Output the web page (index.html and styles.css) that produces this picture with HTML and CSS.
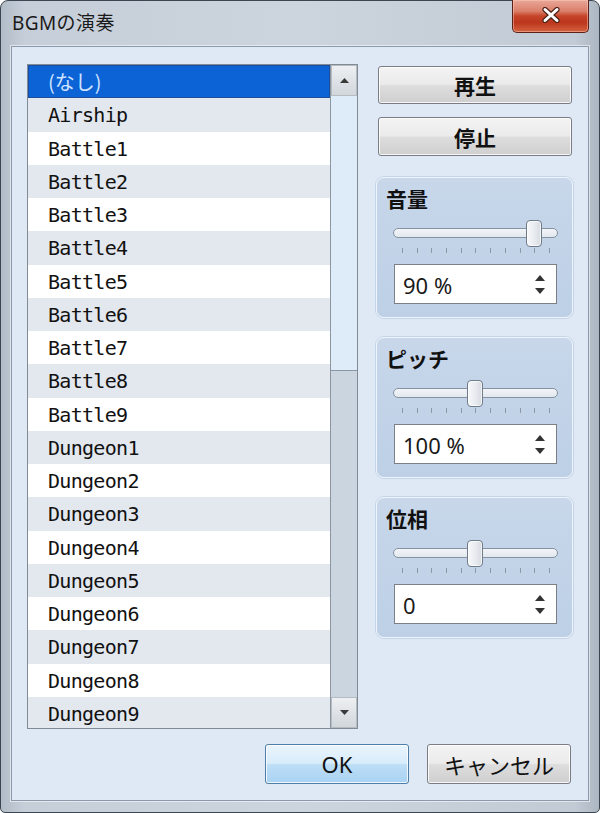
FILE: index.html
```html
<!DOCTYPE html>
<html lang="ja">
<head>
<meta charset="utf-8">
<title>BGMの演奏</title>
<link rel="stylesheet" href="styles.css">
</head>
<body>
<div class="window">
  <div class="titlebar">
    <span class="title">BGMの演奏</span>
    <div class="close">
      <svg width="20" height="16" viewBox="0 0 20 16">
        <path d="M4 2.5 L16 13.5 M16 2.5 L4 13.5" stroke="#4a2018" stroke-width="5.2" stroke-linecap="round"/>
        <path d="M4 2.5 L16 13.5 M16 2.5 L4 13.5" stroke="#ffffff" stroke-width="3" stroke-linecap="round"/>
      </svg>
    </div>
  </div>
  <div class="client">
    <div class="main">
      <div class="listbox">
        <div class="rows">
          <div class="row sel">(なし)</div>
          <div class="row alt">Airship</div>
          <div class="row">Battle1</div>
          <div class="row alt">Battle2</div>
          <div class="row">Battle3</div>
          <div class="row alt">Battle4</div>
          <div class="row">Battle5</div>
          <div class="row alt">Battle6</div>
          <div class="row">Battle7</div>
          <div class="row alt">Battle8</div>
          <div class="row">Battle9</div>
          <div class="row alt">Dungeon1</div>
          <div class="row">Dungeon2</div>
          <div class="row alt">Dungeon3</div>
          <div class="row">Dungeon4</div>
          <div class="row alt">Dungeon5</div>
          <div class="row">Dungeon6</div>
          <div class="row alt">Dungeon7</div>
          <div class="row">Dungeon8</div>
          <div class="row alt">Dungeon9</div>
        </div>
        <div class="scrollbar">
          <div class="sb-btn"><svg width="9" height="5" viewBox="0 0 9 5"><path d="M0 5 L4.5 0 L9 5 Z" fill="#3a3a3a"/></svg></div>
          <div class="sb-thumb"></div>
          <div class="sb-track"></div>
          <div class="sb-btn"><svg width="9" height="5" viewBox="0 0 9 5"><path d="M0 0 L9 0 L4.5 5 Z" fill="#3a3a3a"/></svg></div>
        </div>
      </div>
      <div class="side">
        <div class="btn btn-play">再生</div>
        <div class="btn btn-stop">停止</div>

        <div class="group">
          <div class="group-label">音量</div>
          <div class="slider">
            <div class="track"></div>
            <div class="thumb" style="left: 133px"></div>
          </div>
          <div class="ticks"><i></i><i></i><i></i><i></i><i></i><i></i><i></i><i></i><i></i><i></i><i></i></div>
          <div class="spin">
            <span class="spin-val">90 %</span>
            <div class="spin-arrows">
              <svg width="10" height="6" viewBox="0 0 10 6"><path d="M0 6 L5 0 L10 6 Z" fill="#333"/></svg>
              <svg width="10" height="6" viewBox="0 0 10 6"><path d="M0 0 L10 0 L5 6 Z" fill="#333"/></svg>
            </div>
          </div>
        </div>

        <div class="group">
          <div class="group-label">ピッチ</div>
          <div class="slider">
            <div class="track"></div>
            <div class="thumb" style="left: 74px"></div>
          </div>
          <div class="ticks"><i></i><i></i><i></i><i></i><i></i><i></i><i></i><i></i><i></i><i></i><i></i></div>
          <div class="spin">
            <span class="spin-val">100 %</span>
            <div class="spin-arrows">
              <svg width="10" height="6" viewBox="0 0 10 6"><path d="M0 6 L5 0 L10 6 Z" fill="#333"/></svg>
              <svg width="10" height="6" viewBox="0 0 10 6"><path d="M0 0 L10 0 L5 6 Z" fill="#333"/></svg>
            </div>
          </div>
        </div>

        <div class="group">
          <div class="group-label">位相</div>
          <div class="slider">
            <div class="track"></div>
            <div class="thumb" style="left: 74px"></div>
          </div>
          <div class="ticks"><i></i><i></i><i></i><i></i><i></i><i></i><i></i><i></i><i></i><i></i><i></i></div>
          <div class="spin">
            <span class="spin-val">0</span>
            <div class="spin-arrows">
              <svg width="10" height="6" viewBox="0 0 10 6"><path d="M0 6 L5 0 L10 6 Z" fill="#333"/></svg>
              <svg width="10" height="6" viewBox="0 0 10 6"><path d="M0 0 L10 0 L5 6 Z" fill="#333"/></svg>
            </div>
          </div>
        </div>
      </div>
    </div>
    <div class="footer">
      <div class="btn btn-ok">OK</div>
      <div class="btn btn-cancel">キャンセル</div>
    </div>
  </div>
</div>
</body>
</html>
```

FILE: styles.css
```css
* { box-sizing: border-box; }
html, body {
  margin: 0;
  padding: 0;
  width: 600px;
  height: 813px;
  background: #ffffff;
  overflow: hidden;
}
.window {
  width: 600px;
  height: 813px;
  border: 1px solid #3a4652;
  border-radius: 8px 8px 5px 5px;
  background: linear-gradient(90deg, #b2bcc7 0%, #c6cfd9 4%, #ccd4dd 50%, #c2cbd5 96%, #acb6c1 100%);
  display: flex;
  flex-direction: column;
  padding: 0 10px 11px 10px;
  font-family: "Noto Sans", "Noto Sans CJK JP", sans-serif;
  color: #111;
}
.titlebar {
  height: 45px;
  display: flex;
  align-items: flex-start;
  flex: none;
}
.title {
  font-family: "Noto Sans", "Noto Sans CJK JP", sans-serif;
  font-size: 19px;
  line-height: 24px;
  margin-top: 10px;
  margin-left: 1px;
  color: #1a1a1a;
  letter-spacing: 0.4px;
}
.close {
  margin-left: auto;
  margin-right: 0;
  margin-top: -1px;
  width: 77px;
  height: 33px;
  border: 1px solid #5c2219;
  border-top: none;
  border-radius: 0 0 5px 5px;
  background: linear-gradient(180deg, #e9a798 0%, #da7f69 35%, #c6452a 50%, #bb361c 70%, #d4613f 100%);
  box-shadow: inset 0 0 0 1px rgba(255, 210, 195, 0.45);
  display: flex;
  align-items: center;
  justify-content: center;
  padding-bottom: 2px;
}
.client {
  flex: 1;
  border: 1px solid #8a9aac;
  box-shadow: 0 0 0 1px rgba(255, 255, 255, 0.55);
  background: #dfe9f5;
  padding: 17px 0 0 15px;
  display: flex;
  flex-direction: column;
}
.main {
  display: flex;
  align-items: flex-start;
}
.listbox {
  width: 331px;
  height: 665px;
  border: 1px solid #828a94;
  display: flex;
  overflow: hidden;
  background: #ffffff;
}
.rows {
  flex: 1;
  overflow: hidden;
}
.row {
  height: 33.25px;
  padding: 3px 0 0 20px;
  font-family: "DejaVu Sans Mono", "Noto Sans CJK JP", monospace;
  font-size: 20px;
  letter-spacing: -0.7px;
  line-height: 28px;
  color: #111;
  background: #ffffff;
  white-space: nowrap;
}
.row.alt { background: #e3e8ef; }
.row.sel {
  background: #0c63d6;
  border: 1px solid #1b4f9e;
  color: #cfe3ff;
  padding: 2px 0 0 19px;
  font-family: "Noto Sans CJK JP", sans-serif;
  font-size: 20px;
  letter-spacing: 0;
}
.scrollbar {
  width: 27px;
  border-left: 1px solid #8c96a1;
  display: flex;
  flex-direction: column;
  flex: none;
}
.sb-btn {
  height: 31px;
  flex: none;
  display: flex;
  align-items: center;
  justify-content: center;
  background: linear-gradient(180deg, #eef0f2 0%, #dfe3e7 50%, #d2d7dc 100%);
  border: 1px solid #b5bcc4;
}
.sb-thumb {
  height: 275px;
  flex: none;
  background: #deebf8;
  border-bottom: 1px solid #8c96a1;
}
.sb-track {
  flex: 1;
  background: #cbd5df;
}
.side {
  width: 197px;
  margin-left: 18px;
  display: flex;
  flex-direction: column;
}
.btn {
  border: 1px solid #7a7e84;
  border-radius: 3px;
  background: linear-gradient(180deg, #f3f3f3 0%, #ebebeb 48%, #dddddd 52%, #cfcfcf 100%);
  box-shadow: inset 0 0 0 1px rgba(255, 255, 255, 0.8);
  display: flex;
  align-items: center;
  justify-content: center;
  color: #111;
}
.btn-play, .btn-stop {
  margin: 0 1px 0 2px;
  font-family: "Noto Sans CJK JP", sans-serif;
  font-weight: 700;
  font-size: 21px;
}
.btn-play { margin-top: 2px; height: 38px; }
.btn-stop { margin-top: 13px; height: 39px; }
.group {
  height: 141px;
  margin-top: 19px;
  border: 1px solid #eef4fb;
  border-radius: 8px;
  background: linear-gradient(180deg, #c8d7ea 0%, #bdd0e6 100%);
  box-shadow: 0 0 0 1px rgba(180, 198, 220, 0.6);
  padding: 6px 0 0 9px;
  position: relative;
}
.btn-stop + .group { margin-top: 21px; }
.group-label {
  font-family: "Noto Sans CJK JP", sans-serif;
  font-weight: 700;
  font-size: 21px;
  line-height: 28px;
  color: #111;
}
.slider {
  position: relative;
  width: 165px;
  height: 27px;
  margin: 8px 0 0 7px;
}
.track {
  position: absolute;
  left: 0;
  right: 0;
  top: 8px;
  height: 10px;
  border: 1px solid #8793a0;
  border-radius: 5px;
  background: linear-gradient(180deg, #f2f5f9, #e2e8ef);
}
.thumb {
  position: absolute;
  top: 0;
  width: 16px;
  height: 27px;
  border: 1px solid #6f7b88;
  border-radius: 4px;
  background: linear-gradient(90deg, #f7f8fa 0%, #e9ecf0 50%, #d6dbe1 100%);
  box-shadow: inset 0 0 0 1px rgba(255, 255, 255, 0.7);
}
.ticks {
  display: flex;
  justify-content: space-between;
  width: 148px;
  margin: 1px 0 0 16px;
  height: 5px;
}
.ticks i {
  display: block;
  width: 1px;
  height: 5px;
  background: #8d99a6;
}
.spin {
  width: 163px;
  height: 40px;
  margin: 11px 0 0 8px;
  background: #ffffff;
  border: 1px solid #7b8086;
  display: flex;
  align-items: center;
  padding: 0 0 0 8px;
}
.spin-val {
  font-family: "Noto Sans", sans-serif;
  font-size: 22px;
  color: #1a1a1a;
  line-height: 38px;
  padding-top: 1px;
}
.spin-arrows {
  margin-left: auto;
  width: 30px;
  display: flex;
  flex-direction: column;
  align-items: center;
  gap: 7px;
  padding-right: 2px;
}
.spin-arrows svg { display: block; }
.footer {
  margin-top: 15px;
  display: flex;
  justify-content: flex-end;
  gap: 18px;
  padding-right: 17px;
}
.btn-ok, .btn-cancel {
  width: 144px;
  height: 40px;
  font-family: "Noto Sans", "Noto Sans CJK JP", sans-serif;
  font-size: 22px;
}
.btn-ok {
  border-color: #4f7fa8;
  background: linear-gradient(180deg, #eaf5fd 0%, #d8ecfb 48%, #bddef6 52%, #a9d2f3 100%);
}
.btn-cancel {
  font-family: "Noto Sans CJK JP", sans-serif;
}
```
